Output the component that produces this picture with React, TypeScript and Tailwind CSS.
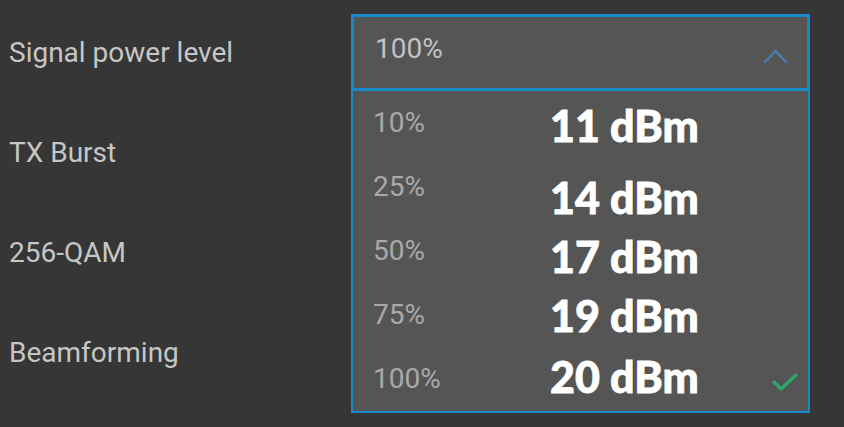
import React from 'react';

const labels = ['Signal power level', 'TX Burst', '256-QAM', 'Beamforming'];

const options = [
  { pct: '10%', dbm: '11 dBm', top: 'top-[13px]' },
  { pct: '25%', dbm: '14 dBm', top: 'top-[21px]' },
  { pct: '50%', dbm: '17 dBm', top: 'top-[16px]' },
  { pct: '75%', dbm: '19 dBm', top: 'top-[11px]' },
  { pct: '100%', dbm: '20 dBm', top: 'top-[8px]', selected: true },
];

const App: React.FC = () => {
  return (
    <div className="w-[844px] h-[427px] overflow-hidden bg-[#363636] flex font-['Roboto',sans-serif]">
      {/* labels column */}
      <div className="w-[351px] shrink-0 pl-[9px] pt-[37px] flex flex-col gap-[68px]">
        {labels.map((l) => (
          <div key={l} className="text-[28px] leading-[32px] text-[#c6c6c6]">
            {l}
          </div>
        ))}
      </div>

      {/* open select */}
      <div className="w-[459px] mt-[14px] flex flex-col">
        <div className="relative h-[77px] border-[3px] border-[#1789c9] bg-[#555555] flex items-center pl-[21px] pb-[7px]">
          <span className="text-[28px] leading-[32px] text-[#c2c2c2]">100%</span>
          <svg
            className="absolute right-[19px] top-[31px]"
            width="25"
            height="16"
            viewBox="0 0 25 16"
            fill="none"
          >
            <polyline
              points="2,14 12.5,3 23,14"
              stroke="#4b78a6"
              strokeWidth="2.6"
              strokeLinecap="round"
              strokeLinejoin="round"
            />
          </svg>
        </div>
        <div className="border-x-2 border-b-2 border-[#1789c9] bg-[#555555] flex flex-col">
          {options.map((o) => (
            <div key={o.pct} className="relative h-[64px] flex items-center pl-[20px]">
              <span className="text-[28px] leading-[32px] text-[#a9a9a9]">{o.pct}</span>
              <span
                className={`absolute left-[197px] ${o.top} text-[43px] leading-[43px] font-black text-white font-['Lato',sans-serif] [-webkit-text-stroke:0.8px_#ffffff]`}
              >
                {o.dbm}
              </span>
              {o.selected && (
                <svg
                  className="absolute right-[9px] top-[25px]"
                  width="28"
                  height="20"
                  viewBox="0 0 28 20"
                  fill="none"
                >
                  <polyline
                    points="3,10 10,17 25,3"
                    stroke="#2ea866"
                    strokeWidth="3.2"
                    strokeLinecap="round"
                    strokeLinejoin="round"
                  />
                </svg>
              )}
            </div>
          ))}
        </div>
      </div>
    </div>
  );
};

export default App;
